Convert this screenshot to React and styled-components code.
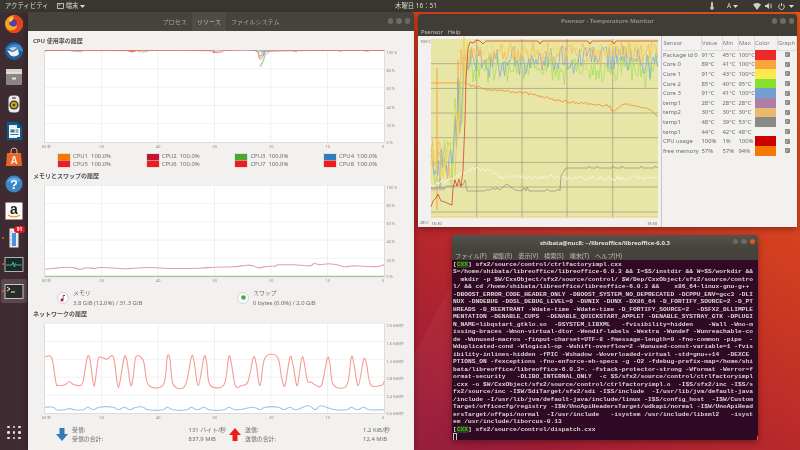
import styled, { createGlobalStyle } from "styled-components";

const GlobalStyle = createGlobalStyle`
  html, body { margin: 0; padding: 0; background: #000; }
  body { width: 800px; height: 450px; overflow: hidden; }
  * { box-sizing: border-box; }
`;

const UI_FONT = `"Noto Sans", "Noto Sans CJK JP", sans-serif`;

const Desktop = styled.div`
  position: relative;
  width: 800px;
  height: 450px;
  overflow: hidden;
  font-family: ${UI_FONT};
  filter: blur(0.3px);
  background:
    linear-gradient(118deg, transparent 58%, rgba(255, 255, 255, 0.035) 58%, transparent 75%),
    linear-gradient(200deg, transparent 70%, rgba(120, 10, 60, 0.25) 90%),
    linear-gradient(32deg, #7f1741 0%, #9c1c38 32%, #b8282b 52%, #d23f20 72%, #e8571a 100%);
`;

/* ---------- top bar ---------- */

const TopBar = styled.header`
  display: flex;
  align-items: center;
  height: 12px;
  background: #3a3730;
  color: #dcdad5;
  font-size: 6.4px;
  line-height: 12px;
`;

const TopLeft = styled.div`
  flex: 0 0 395px;
  display: flex;
  align-items: center;
  padding-left: 5px;
  gap: 8px;
`;

const AppMenu = styled.span`
  display: flex;
  align-items: center;
  gap: 2px;
`;

const Clock = styled.span`
  flex: 0 0 40px;
  white-space: nowrap;
`;

const TopRight = styled.div`
  flex: 1;
  display: flex;
  align-items: center;
  justify-content: flex-end;
  padding-right: 6px;
`;

const TrayItem = styled.span`
  display: flex;
  align-items: center;
  margin-left: ${(p) => p.$gap}px;
`;

const Caret = () => (
  <svg width="5" height="3" viewBox="0 0 5 3">
    <path d="M0 0h5L2.5 3z" fill="#dcdad5" />
  </svg>
);

/* ---------- dock ---------- */

const Dock = styled.nav`
  position: absolute;
  left: 0;
  top: 12px;
  bottom: 0;
  width: 28px;
  background: #3f2b32;
  display: flex;
  flex-direction: column;
  gap: 2.7px;
`;

const DockSlot = styled.div`
  position: relative;
  height: 24px;
  display: flex;
  align-items: center;
  justify-content: center;
  border-radius: 2px;
  margin: 0 1px;
  background: ${(p) => (p.$active ? "rgba(255,255,255,0.14)" : "transparent")};
`;

const RunDot = styled.i`
  position: absolute;
  left: 1px;
  top: 11px;
  width: 2px;
  height: 2px;
  border-radius: 50%;
  background: #e95420;
`;

const Badge = styled.b`
  position: absolute;
  right: 2px;
  top: 0;
  height: 7px;
  width: 11px;
  border-radius: 4px;
  background: #e8141a;
  color: #fff;
  font-size: 5px;
  line-height: 7px;
  text-align: center;
`;

const GridButton = styled.div`
  margin-top: auto;
  margin-bottom: 11px;
  display: grid;
  grid-template-columns: repeat(3, 2.5px);
  gap: 3px;
  justify-content: center;
  i {
    width: 2.5px;
    height: 2.5px;
    border-radius: 50%;
    background: #e6e2e2;
  }
`;

const Icon = ({ children }) => (
  <svg width="20" height="20" viewBox="0 0 20 20">
    {children}
  </svg>
);

const FirefoxIcon = () => (
  <Icon>
    <circle cx="10" cy="10" r="9" fill="#f7a31c" />
    <path d="M10 1a9 9 0 0 1 9 9c0 5-4 9-9 9-3 0-6-2-7.500-4 3 2 8 2 10-1 1-2 0-4-2-5 1 0 1-1 0-2-1 0-2-1-2-2 0-1 1-3 1.500-4z" fill="#e8431f" />
    <circle cx="9" cy="9" r="3.800" fill="#5b3fa8" />
    <path d="M5 6c1-2 3-3 5-3-1 1-1 2-1 3-1 0-2 1-2 2-1 0-2-1-2-2z" fill="#fdd23a" />
    <path d="M6 11c1 2 4 3 6 1-1 3-6 3-7 0z" fill="#f9c22a" />
  </Icon>
);

const ThunderbirdIcon = () => (
  <Icon>
    <circle cx="10" cy="10" r="9" fill="#1f5f9f" />
    <path d="M2 8c3-4 8-6 14-4 2 2 3 5 3 7-3-1-4-3-7-3-2 0-6 0-10 0z" fill="#3a8ed0" />
    <path d="M3 9l6 2 5-3 1 5c-2 3-7 3-9 1z" fill="#eef1f4" />
    <path d="M5 8c2-2 6-3 8-1l-4 3z" fill="#c9d2dc" />
  </Icon>
);

const FilesIcon = () => (
  <Icon>
    <rect x="2" y="2" width="16" height="16" rx="1.500" fill="#8b8780" />
    <rect x="2" y="2" width="16" height="4.500" fill="#d5d2cc" />
    <rect x="2" y="5.500" width="16" height="1.200" fill="#f2f0ec" />
    <rect x="8" y="10.500" width="4" height="2" rx="0.500" fill="#e9e7e2" />
  </Icon>
);

const RhythmboxIcon = () => (
  <Icon>
    <rect x="4.500" y="1.500" width="11" height="17" rx="4" fill="#ecebe3" />
    <circle cx="10" cy="11" r="4.600" fill="#3a3730" />
    <circle cx="10" cy="11" r="3.200" fill="#c9a227" />
    <circle cx="10" cy="11" r="1.200" fill="#4a3d12" />
    <rect x="8" y="3" width="4" height="2" rx="1" fill="#777" />
  </Icon>
);

const WriterIcon = () => (
  <Icon>
    <path d="M3 1h11l4 4v14H3z" fill="#0f5b8d" />
    <path d="M13 1h3l3 3v3z" fill="#0c3d5f" />
    <rect x="5" y="4" width="8" height="13" fill="#e8eef2" />
    <rect x="5" y="7" width="11" height="9" fill="#f4f6f7" />
    <rect x="6.500" y="8.500" width="4" height="3" fill="#3a6f95" />
    <path d="M11.500 9h3M11.500 11h3M6.500 13.500h8" stroke="#3a6f95" />
  </Icon>
);

const SoftwareIcon = () => (
  <Icon>
    <path d="M3 6h14l1 13H2z" fill="#e9662b" />
    <path d="M7 7V4a3 3 0 0 1 6 0v3" fill="none" stroke="#f7b08f" />
    <text x="10" y="16.500" textAnchor="middle" fontSize="10" fontWeight="700" fill="#fbe6da" fontFamily="Liberation Sans">A</text>
  </Icon>
);

const HelpIcon = () => (
  <Icon>
    <circle cx="10" cy="10" r="8.500" fill="#3b86c8" />
    <path d="M3 8a8 8 0 0 1 14 0c-4-2-10-2-14 0z" fill="#6aa9dd" />
    <text x="10" y="15" textAnchor="middle" fontSize="13" fontWeight="700" fill="#fff" fontFamily="Liberation Sans">?</text>
  </Icon>
);

const AmazonIcon = () => (
  <Icon>
    <rect x="1.500" y="1.500" width="17" height="17" fill="#fbfbf9" />
    <text x="10" y="13" textAnchor="middle" fontSize="14" fontWeight="700" fill="#222" fontFamily="Liberation Sans">a</text>
    <path d="M4 14c3 2.500 9 2.500 12 0" fill="none" stroke="#f0961e" strokeWidth="1.300" />
  </Icon>
);

const ThermoIcon = () => (
  <Icon>
    <rect x="5.500" y="0.500" width="9" height="19" fill="#e8edf2" />
    <rect x="8" y="5" width="4" height="13" fill="#4f8fdc" />
    <path d="M6 4h2M6 8h2M6 12h2M6 16h2" stroke="#9aa6b2" strokeWidth="0.600" />
  </Icon>
);

const MonitorIcon = () => (
  <Icon>
    <rect x="0.500" y="3" width="19" height="15" fill="#b3b3ae" />
    <rect x="1.500" y="4" width="17" height="13" fill="#1a2a2a" />
    <path d="M2 11h6l1-3 1.500 5 1-3.500 1 1.500h5" fill="none" stroke="#5fd0a8" strokeWidth="0.800" />
  </Icon>
);

const TerminalIcon = () => (
  <Icon>
    <rect x="0.500" y="3" width="19" height="15" fill="#c9c8c3" />
    <rect x="1.500" y="4" width="17" height="13" fill="#2b2a28" />
    <path d="M3 6l3 2-3 2" fill="none" stroke="#f0f0f0" strokeWidth="1" />
    <path d="M7 11h4" stroke="#f0f0f0" strokeWidth="1" />
  </Icon>
);

/* ---------- windows ---------- */

const Win = styled.section`
  position: absolute;
  left: ${(p) => p.$x}px;
  top: ${(p) => p.$y}px;
  width: ${(p) => p.$w}px;
  height: ${(p) => p.$h}px;
  display: flex;
  flex-direction: column;
  overflow: hidden;
  border-radius: 3px 3px 0 0;
  box-shadow: 0 2px 6px rgba(0, 0, 0, 0.35);
`;

const WinButtons = styled.div`
  position: absolute;
  right: ${(p) => p.$right}px;
  top: ${(p) => p.$top}px;
  display: flex;
  gap: 3px;
`;

const WinButton = styled.i`
  width: 5.500px;
  height: 5.500px;
  border-radius: 50%;
  background: ${(p) => (p.$close ? "#e95420" : "#6d6a63")};
`;

/* ---------- system monitor ---------- */

const MonitorHeader = styled.div`
  flex: 0 0 19px;
  display: flex;
  justify-content: center;
  background: #46433c;
  color: #a9a69f;
  font-size: 6.100px;
`;

const Tab = styled.span`
  display: flex;
  align-items: center;
  padding: 0 5px;
  background: ${(p) => (p.$active ? "#4f4c45" : "transparent")};
  color: ${(p) => (p.$active ? "#c4c2bb" : "#a9a69f")};
`;

const MonitorBody = styled.div`
  flex: 1;
  display: flex;
  flex-direction: column;
  background: #f2f1f0;
  padding: 6px 0 0 0;
  color: #6d6d6a;
  font-size: 5.900px;
`;

const SectionTitle = styled.h3`
  margin: ${(p) => p.$top || 0}px 0 ${(p) => p.$bottom}px 5px;
  height: 8px;
  font-size: 6px;
  line-height: 8px;
  font-weight: 700;
  color: #55534f;
`;

const PlotSvg = styled.svg`
  display: block;
  flex: none;
`;

const CpuLegend = styled.div`
  display: grid;
  grid-template-columns: repeat(4, 88.700px);
  margin: 2.500px 0 0 29px;
`;

const CpuCell = styled.div`
  display: flex;
  align-items: center;
  gap: 2px;
  height: 15px;
`;

const CpuSwatch = styled.div`
  width: 14px;
  height: 15px;
  border: 1px solid #e2e0de;
  background: linear-gradient(
    ${(p) => p.$color} 0 44%,
    #c98a8a 44% 54%,
    #ef1c1c 54% 100%
  );
`;

const CpuText = styled.div`
  line-height: 7.500px;
  white-space: pre;
`;

const MemLegend = styled.div`
  display: grid;
  grid-template-columns: 180px 180px;
  margin: 3px 0 0 29px;
`;

const MemCell = styled.div`
  display: flex;
  align-items: center;
  gap: 4px;
  height: 20px;
  line-height: 10px;
`;

const PieRing = styled.div`
  position: relative;
  width: 12px;
  height: 12px;
  border-radius: 50%;
  background: #fafafa;
  border: 1px solid #d6d4d1;
  display: flex;
  align-items: center;
  justify-content: center;
`;

const NetLegend = styled.div`
  display: grid;
  grid-template-columns: 170px 161px;
  gap: 3px;
  margin: 4.500px 0 0 28px;
`;

const NetCell = styled.div`
  display: flex;
  align-items: center;
  gap: 4px;
`;

const NetRows = styled.div`
  flex: 1;
  display: grid;
  grid-template-columns: 1fr auto;
  line-height: 9px;
`;

const trace = (pts, top) => {
  const p = pts.map(([x, y]) => [(x - 135) / 3, (y - top) / 3]);
  let d = `M${p[0][0].toFixed(1)} ${p[0][1].toFixed(1)}`;
  for (let i = 0; i < p.length - 1; i++) {
    const a = p[Math.max(i - 1, 0)];
    const b = p[i];
    const c = p[i + 1];
    const e = p[Math.min(i + 2, p.length - 1)];
    const c1 = [b[0] + (c[0] - a[0]) / 6, b[1] + (c[1] - a[1]) / 6];
    const c2 = [c[0] - (e[0] - b[0]) / 6, c[1] - (e[1] - b[1]) / 6];
    d += `C${c1[0].toFixed(1)} ${c1[1].toFixed(1)} ${c2[0].toFixed(1)} ${c2[1].toFixed(1)} ${c[0].toFixed(1)} ${c[1].toFixed(1)}`;
  }
  return d;
};

const XTICKS = ["60 秒", "50", "40", "30", "20", "10", "0"];

const ResourceChart = ({ height, yLabels, top, series }) => {
  const W = 339;
  const L = 17;
  const step = height / 5;
  return (
    <PlotSvg width="387" height={height + 9}>
      <g transform={`translate(${L} 0.5)`}>
        <rect x="-1" y="-0.500" width={W + 2} height={height + 1.500} fill="#dfddda" />
        <rect width={W} height={height} fill="#fff" />
        {[1, 2, 3, 4, 5].map((i) => (
          <path key={i} d={`M${(W * i) / 6} 0V${height}`} stroke="#ededec" strokeWidth="0.800" />
        ))}
        {[1, 2, 3, 4].map((i) => (
          <path key={i} d={`M0 ${step * i}H${W}`} stroke="#ededec" strokeWidth="0.800" />
        ))}
        {series.map((s, i) => (
          <path
            key={i}
            d={trace(s.pts, top)}
            fill="none"
            stroke={s.color}
            strokeWidth={s.width || 0.900}
            strokeLinejoin="round"
          />
        ))}
        {yLabels.map((t, i) => (
          <text
            key={t}
            x={W + 2.500}
            y={step * i + (i === 5 ? 1.500 : 3.200)}
            fontSize="3.800"
            fill="#8a8986"
          >
            {t}
          </text>
        ))}
        {XTICKS.map((t, i) => (
          <text
            key={t}
            x={(W * i) / 6 - (i === 0 ? 3 : 2)}
            y={height + 5.500}
            fontSize="3.800"
            fill="#8a8986"
          >
            {t}
          </text>
        ))}
      </g>
    </PlotSvg>
  );
};

const PCT = ["100 %", "80 %", "60 %", "40 %", "20 %", "0 %"];
const NET_Y = ["2.0 KiB/秒", "1.6 KiB/秒", "1.2 KiB/秒", "0.8 KiB/秒", "0.4 KiB/秒", "0.0 KiB/秒"];

const CPU_SERIES = [
  { color: "#f5b27a", pts: [[135, 152], [380, 153], [395, 156], [410, 152], [620, 153], [640, 158], [665, 152], [765, 152], [778, 172], [792, 158], [805, 152], [880, 152], [890, 156], [900, 152], [1153, 152]] },
  { color: "#8fc0e6", pts: [[135, 155], [150, 152], [235, 152], [245, 156], [255, 152], [765, 152], [780, 168], [795, 155], [810, 152], [1153, 152]] },
  { color: "#9ad08a", pts: [[135, 152], [420, 152], [430, 157], [440, 152], [765, 152], [780, 200], [795, 168], [808, 153], [1085, 152], [1095, 155], [1105, 152], [1153, 152]] },
  { color: "#ee6a6a", pts: [[135, 152], [385, 152], [395, 156], [405, 152], [625, 152], [640, 158], [665, 156], [680, 152], [765, 152], [780, 178], [795, 160], [808, 154], [1000, 152], [1020, 154], [1040, 152], [1153, 152]] },
];

const MEM_SERIES = [
  { color: "#dfa0b4", width: 1.100, pts: [[135, 298], [160, 296], [185, 293], [215, 293], [240, 298], [260, 294], [285, 296], [300, 293], [350, 295], [380, 297], [440, 293], [520, 296], [600, 295], [640, 292], [700, 291], [740, 286], [760, 288], [775, 294], [800, 290], [825, 289], [835, 285], [880, 285], [930, 288], [942, 281], [960, 285], [985, 282], [1010, 285], [1035, 291], [1060, 288], [1110, 290], [1135, 290], [1153, 284]] },
  { color: "#86c27a", width: 1.100, pts: [[135, 319], [1153, 319]] },
];

const NET_SERIES = [
  { color: "#f59c94", width: 1.100, pts: [[135, 142], [155, 145], [168, 220], [175, 227], [195, 226], [208, 216], [222, 226], [245, 226], [252, 200], [262, 143], [270, 150], [282, 230], [292, 165], [298, 143], [320, 149], [340, 142], [352, 222], [358, 227], [372, 147], [380, 150], [392, 227], [400, 200], [408, 142], [430, 153], [445, 226], [490, 226], [502, 143], [510, 150], [520, 226], [555, 229], [574, 143], [582, 155], [595, 228], [612, 143], [620, 160], [630, 226], [672, 226], [686, 143], [694, 160], [706, 229], [725, 228], [744, 216], [760, 145], [768, 160], [780, 228], [795, 145], [832, 142], [845, 205], [855, 228], [870, 143], [880, 170], [892, 228], [907, 142], [922, 212], [935, 218], [945, 226], [965, 226], [982, 146], [990, 165], [1000, 226], [1040, 228], [1054, 143], [1062, 165], [1075, 228], [1091, 150], [1100, 165], [1112, 226], [1145, 227], [1153, 215]] },
  { color: "#9cc6e6", width: 1.100, pts: [[135, 293], [160, 293], [170, 301], [195, 301], [208, 296], [222, 301], [250, 301], [263, 293], [280, 301], [298, 293], [340, 293], [355, 301], [373, 293], [390, 301], [408, 293], [430, 293], [445, 301], [490, 301], [502, 293], [520, 301], [560, 301], [574, 293], [592, 301], [612, 293], [628, 301], [672, 301], [686, 293], [704, 301], [725, 299], [760, 293], [780, 301], [795, 293], [835, 293], [852, 301], [870, 293], [888, 301], [925, 288], [945, 301], [962, 289], [1000, 300], [1040, 301], [1054, 293], [1072, 301], [1091, 293], [1108, 301], [1153, 301]] },
];

const CPUS = [
  ["#f57900", "CPU1  100.0%", "CPU5  100.0%"],
  ["#c4142f", "CPU2  100.0%", "CPU6  100.0%"],
  ["#4aa82f", "CPU3  100.0%", "CPU7  100.0%"],
  ["#2f7dbd", "CPU4  100.0%", "CPU8  100.0%"],
];

const SystemMonitor = () => (
  <Win $x={28} $y={12} $w={386} $h={438}>
    <MonitorHeader>
      <Tab>プロセス</Tab>
      <Tab $active>リソース</Tab>
      <Tab>ファイルシステム</Tab>
    </MonitorHeader>
    <WinButtons $right={4} $top={6}>
      <WinButton />
      <WinButton />
      <WinButton />
    </WinButtons>
    <MonitorBody>
      <SectionTitle $bottom={5}>CPU 使用率の履歴</SectionTitle>
      <ResourceChart height={91.500} top={152} yLabels={PCT} series={CPU_SERIES} />
      <CpuLegend>
        {CPUS.map(([c, a, b]) => (
          <CpuCell key={a}>
            <CpuSwatch $color={c} />
            <CpuText>
              {a}
              <br />
              {b}
            </CpuText>
          </CpuCell>
        ))}
      </CpuLegend>
      <SectionTitle $top={3.500} $bottom={5}>メモリとスワップの履歴</SectionTitle>
      <ResourceChart height={91} top={47} yLabels={PCT} series={MEM_SERIES} />
      <MemLegend>
        <MemCell>
          <PieRing>
            <svg width="8" height="8" viewBox="0 0 8 8">
              <path d="M4 1l2 0 0 1-1.500 0 0 4a1.500 1.500 0 1 1-1-1.300z" fill="#a41e4f" />
            </svg>
          </PieRing>
          <div>
            メモリ
            <br />
            3.8 GiB (12.0%) / 31.3 GiB
          </div>
        </MemCell>
        <MemCell>
          <PieRing>
            <svg width="5" height="5" viewBox="0 0 5 5">
              <circle cx="2.500" cy="2.500" r="2.300" fill="#4aa84a" />
            </svg>
          </PieRing>
          <div>
            スワップ
            <br />
            0 bytes (0.0%) / 2.0 GiB
          </div>
        </MemCell>
      </MemLegend>
      <SectionTitle $top={2.500} $bottom={4.500}>ネットワークの履歴</SectionTitle>
      <ResourceChart height={89.500} top={42} yLabels={NET_Y} series={NET_SERIES} />
      <NetLegend>
        <NetCell>
          <svg width="12" height="13" viewBox="0 0 12 13">
            <path d="M3.500 0h5v6H12L6 13 0 6h3.500z" fill="#2f7dbd" />
          </svg>
          <NetRows>
            <span>受信:</span>
            <span>131 バイト/秒</span>
            <span>受信の合計:</span>
            <span>837.9 MiB</span>
          </NetRows>
        </NetCell>
        <NetCell>
          <svg width="12" height="13" viewBox="0 0 12 13">
            <path d="M3.500 13h5V7H12L6 0 0 7h3.500z" fill="#ee1c1c" />
          </svg>
          <NetRows>
            <span>送信:</span>
            <span>1.2 KiB/秒</span>
            <span>送信の合計:</span>
            <span>12.4 MiB</span>
          </NetRows>
        </NetCell>
      </NetLegend>
    </MonitorBody>
  </Win>
);

/* ---------- psensor ---------- */

const SensorHeader = styled.div`
  flex: 0 0 14px;
  display: flex;
  align-items: center;
  justify-content: center;
  background: #403d36;
  color: #8f8c85;
  font-size: 6px;
  font-weight: 700;
`;

const SensorMenu = styled.div`
  flex: 0 0 8px;
  display: flex;
  align-items: center;
  gap: 5px;
  padding-left: 3px;
  background: #403d36;
  color: #c3c1bb;
  font-size: 5.800px;
`;

const SensorBody = styled.div`
  flex: 1;
  display: flex;
  background: #f2f1f0;
`;

const SensorTable = styled.div`
  flex: 1;
  border-left: 1.500px solid #c9c7c4;
  margin-left: 0.500px;
  color: #6b6b68;
  font-size: 5.900px;
`;

const SensorRow = styled.div`
  display: grid;
  grid-template-columns: 38.500px 21px 16px 16px 23px 1fr;
  height: ${(p) => (p.$head ? 14 : 9.600)}px;
  align-items: center;
  padding-left: 1.500px;
  white-space: nowrap;
  span:nth-child(5) {
    align-self: stretch;
  }
`;

const HeadCell = styled.span`
  height: 100%;
  line-height: 14px;
  border-right: 0.500px solid #dedcda;
  border-bottom: 0.500px solid #dedcda;
  color: #7b7b78;
  text-align: ${(p) => (p.$center ? "center" : "left")};
  padding-left: 0.500px;
`;

const ColorCell = styled.span`
  display: block;
  width: 21px;
  background: ${(p) => p.$color};
`;

const CheckCell = styled.span`
  justify-self: center;
  width: 5px;
  height: 5px;
  border-radius: 1px;
  background: #8a8986;
  color: #f4f4f4;
  font: 700 4.500px/5px "DejaVu Sans", sans-serif;
  text-align: center;
`;

const rng = (seed) => () => {
  seed = (seed * 1664525 + 1013904223) % 4294967296;
  return seed / 4294967296;
};

// noisy line through psensor chart, base shifted per sensor
const noisy = (seed, offset, amp, from = 431) => {
  const r = rng(seed);
  const pts = [];
  for (let x = from; x <= 658; x += 1.500) {
    let base = offset;
    let a = amp;
    if (x < 452) {
      base = 155 + offset * 0.1;
      a = 22;
    } else if (x < 466) {
      base = 150 - ((x - 452) / 14) * (150 - offset);
      a = 38;
    }
    const spike = r() < 0.12 ? a * 0.7 : 0;
    pts.push(`${x},${(base + (r() - 0.5) * a * 2 + spike).toFixed(1)}`);
  }
  return pts.join(" ");
};

const wobble = (seed, pts, amp) => {
  const r = rng(seed);
  const out = [];
  for (let i = 0; i < pts.length - 1; i++) {
    const [x0, y0] = pts[i];
    const [x1, y1] = pts[i + 1];
    for (let x = x0; x < x1; x += 1.500) {
      const y = y0 + ((x - x0) / (x1 - x0)) * (y1 - y0);
      out.push(`${x},${(y + (r() - 0.5) * amp * 2).toFixed(1)}`);
    }
  }
  return out.join(" ");
};

const TEMP_LINES = [
  { seed: 11, color: "#a4e05a", y: 68, amp: 13 },
  { seed: 23, color: "#86abd6", y: 58, amp: 12 },
  { seed: 37, color: "#f9b55a", y: 52, amp: 10 },
  { seed: 41, color: "#f5dc60", y: 49, amp: 7 },
];

const SensorChart = () => (
  <svg width="242" height="191" viewBox="418 36 242 191" style={{ display: "block", flex: "none" }}>
    <rect x="431" y="39" width="227" height="179" fill="#e8e6a6" />
    {[476.700, 522, 567, 612.700].map((x) => (
      <path key={x} d={`M${x} 39V218`} stroke="#a3a184" strokeWidth="0.800" />
    ))}
    {[63.700, 88.400, 113, 137.700, 162.400, 187, 212].map((y) => (
      <path key={y} d={`M431 ${y}H658`} stroke="#a3a184" strokeWidth="0.800" />
    ))}
    <path d="M431 216.500H658" stroke="#f0c890" strokeWidth="0.700" />
    <path d="M431 83H466M437 68V210M458 60V130" stroke="#f9a13c" strokeWidth="1" fill="none" />
    {TEMP_LINES.map((l) => (
      <polyline key={l.seed} points={noisy(l.seed, l.y, l.amp)} fill="none" stroke={l.color} strokeWidth="0.800" strokeLinejoin="round" />
    ))}
    <polyline
      points={wobble(7, [[431, 186], [445, 181], [472, 169], [490, 170], [500, 177], [560, 177], [566, 178], [658, 178]], 2.200)}
      fill="none"
      stroke="#f6f4e0"
      strokeWidth="1"
    />
    <path d="M431 189H445" stroke="#c9c7a8" strokeWidth="3" />
    <polyline
      points="431,188 445,188 447,186 457,186 460,184 463,185 465,180 467,191 484,191 486,190 490,190 493,188 495,190 497,188 500,190 503,187 507,184 511,187 515,190 522,191 524,188 526,191 527,187 529,191 545,191 547,189 549,191 556,191 558,189 560,191 561,176 565,169 567,168 588,168 589,166 591,168 596,168 597,166 599,168 612,168 613,166 615,168 621,168 622,166 624,168 640,168 641,166 643,168 654,168 655,166 658,168"
      fill="none"
      stroke="#8e8c76"
      strokeWidth="0.700"
    />
    <polyline
      points="431,207 433,201 436,198 438,194 441,201 445,202 449,204 452,205 453,188 455,180 457,186 459,179 461,187 463,170 465,120 466,80 468,48 470,42 474,43 476,40 480,41 483,44 486,41 500,41 503,41 520,41 538,41 540,44 542,41 588,41 590,44 592,41 612,41 614,44 616,41 658,41"
      fill="none"
      stroke="#d8432a"
      strokeWidth="0.800"
    />
    <polyline
      points={wobble(19, [[468, 85], [490, 90], [520, 92], [540, 96], [560, 101], [580, 103], [610, 106], [612, 112], [625, 104], [650, 109], [658, 116]], 1.300)}
      fill="none"
      stroke="#f08a24"
      strokeWidth="0.800"
    />
    <g fontSize="4" fill="#66665f">
      <text x="420" y="43">100°C</text>
      <text x="420" y="223.500">28°C</text>
      <text x="431.500" y="224.500">16:30</text>
      <text x="647" y="224.500">16:50</text>
    </g>
  </svg>
);

const SENSORS = [
  ["Package id 0", "91°C", "45°C", "100°C", "#ef2929"],
  ["Core 0", "89°C", "41°C", "100°C", "#f9a53c"],
  ["Core 1", "91°C", "43°C", "100°C", "#fce94f"],
  ["Core 2", "85°C", "40°C", "95°C", "#85e02f"],
  ["Core 3", "91°C", "41°C", "100°C", "#729fcf"],
  ["temp1", "28°C", "28°C", "28°C", "#ad7fa8"],
  ["temp2", "30°C", "30°C", "30°C", "#e9b96e"],
  ["temp1", "48°C", "39°C", "53°C", "#888a85"],
  ["temp1", "44°C", "42°C", "48°C", "#f2f1f0"],
  ["CPU usage", "100%", "1%", "100%", "#cc0000"],
  ["free memory", "57%", "57%", "94%", "#f57900"],
];

const Psensor = () => (
  <Win $x={418} $y={14} $w={379} $h={213}>
    <SensorHeader>Psensor - Temperature Monitor</SensorHeader>
    <WinButtons $right={3} $top={4}>
      <WinButton />
      <WinButton />
      <WinButton />
    </WinButtons>
    <SensorMenu>
      <span>Psensor</span>
      <span>Help</span>
    </SensorMenu>
    <SensorBody>
      <SensorChart />
      <SensorTable>
        <SensorRow $head>
          <HeadCell>Sensor</HeadCell>
          <HeadCell>Value</HeadCell>
          <HeadCell>Min</HeadCell>
          <HeadCell>Max</HeadCell>
          <HeadCell>Color</HeadCell>
          <HeadCell>Graph</HeadCell>
        </SensorRow>
        {SENSORS.map(([name, value, min, max, color], i) => (
          <SensorRow key={i}>
            <span>{name}</span>
            <span>{value}</span>
            <span>{min}</span>
            <span>{max}</span>
            <ColorCell $color={color} />
            <CheckCell>✓</CheckCell>
          </SensorRow>
        ))}
      </SensorTable>
    </SensorBody>
  </Win>
);

/* ---------- terminal ---------- */

const TermHeader = styled.div`
  flex: 0 0 15px;
  display: flex;
  align-items: center;
  justify-content: center;
  background: linear-gradient(#55524b, #45423c);
  color: #e4e2dd;
  font-size: 6px;
  font-weight: 700;
`;

const TermMenu = styled.div`
  flex: 0 0 10px;
  display: flex;
  align-items: center;
  gap: 6px;
  padding-left: 3px;
  background: #45423c;
  color: #bcb9b2;
  font-size: 6.200px;
`;

const TermBody = styled.pre`
  position: relative;
  flex: 1;
  margin: 0;
  padding: 0.500px 0 0 1px;
  background: #300a24;
  color: #dcd8d4;
  font: 700 6.250px/7.500px "Liberation Mono", monospace;
`;

const CxxTag = styled.span`
  color: #58b01a;
  background: #24451c;
`;

const Cursor = styled.span`
  display: inline-block;
  width: 3.750px;
  height: 7.500px;
  border: 0.700px solid #c8c5c2;
  vertical-align: top;
`;

const ScrollMark = styled.i`
  position: absolute;
  right: 0;
  bottom: 0;
  width: 1.500px;
  height: 5px;
  background: #e95420;
`;

const TERM_LINES = [
  "S=/home/shibata/libreoffice/libreoffice-6.0.3 && I=$S/instdir && W=$S/workdir &&",
  "  mkdir -p $W/CxxObject/sfx2/source/control/ $W/Dep/CxxObject/sfx2/source/contro",
  "l/ && cd /home/shibata/libreoffice/libreoffice-6.0.3 &&    x86_64-linux-gnu-g++",
  "-DBOOST_ERROR_CODE_HEADER_ONLY -DBOOST_SYSTEM_NO_DEPRECATED -DCPPU_ENV=gcc3 -DLI",
  "NUX -DNDEBUG -DOSL_DEBUG_LEVEL=0 -DUNIX -DUNX -DX86_64 -D_FORTIFY_SOURCE=2 -D_PT",
  "HREADS -D_REENTRANT -Wdate-time -Wdate-time -D_FORTIFY_SOURCE=2  -DSFX2_DLLIMPLE",
  "MENTATION -DENABLE_CUPS  -DENABLE_QUICKSTART_APPLET -DENABLE_SYSTRAY_GTK -DPLUGI",
  "N_NAME=libqstart_gtklo.so  -DSYSTEM_LIBXML   -fvisibility=hidden    -Wall -Wno-m",
  "issing-braces -Wnon-virtual-dtor -Wendif-labels -Wextra -Wundef -Wunreachable-co",
  "de -Wunused-macros -finput-charset=UTF-8 -fmessage-length=0 -fno-common -pipe  -",
  "Wduplicated-cond -Wlogical-op -Wshift-overflow=2 -Wunused-const-variable=1 -fvis",
  "ibility-inlines-hidden -fPIC -Wshadow -Woverloaded-virtual -std=gnu++14  -DEXCE",
  "PTIONS_ON -fexceptions -fno-enforce-eh-specs -g -O2 -fdebug-prefix-map=/home/shi",
  "bata/libreoffice/libreoffice-6.0.3=. -fstack-protector-strong -Wformat -Werror=f",
  "ormat-security   -DLIBO_INTERNAL_ONLY  -c $S/sfx2/source/control/ctrlfactoryimpl",
  ".cxx -o $W/CxxObject/sfx2/source/control/ctrlfactoryimpl.o  -I$S/sfx2/inc -I$S/s",
  "fx2/source/inc -I$W/SdiTarget/sfx2/sdi -I$S/include  -I/usr/lib/jvm/default-java",
  "/include -I/usr/lib/jvm/default-java/include/linux -I$S/config_host  -I$W/Custom",
  "Target/officecfg/registry -I$W/UnoApiHeadersTarget/udkapi/normal -I$W/UnoApiHead",
  "ersTarget/offapi/normal  -I/usr/include   -isystem /usr/include/libxml2   -isyst",
  "em /usr/include/liborcus-0.13",
];

const Terminal = () => (
  <Win $x={452} $y={235} $w={306} $h={205}>
    <TermHeader>shibata@nuc8: ~/libreoffice/libreoffice-6.0.3</TermHeader>
    <WinButtons $right={3} $top={3.500}>
      <WinButton />
      <WinButton />
      <WinButton $close />
    </WinButtons>
    <TermMenu>
      <span>ファイル(F)</span>
      <span>編集(E)</span>
      <span>表示(V)</span>
      <span>検索(S)</span>
      <span>端末(T)</span>
      <span>ヘルプ(H)</span>
    </TermMenu>
    <TermBody>
      [<CxxTag>CXX</CxxTag>] sfx2/source/control/ctrlfactoryimpl.cxx{"\n"}
      {TERM_LINES.join("\n")}
      {"\n"}[<CxxTag>CXX</CxxTag>] sfx2/source/control/dispatch.cxx{"\n"}
      <Cursor />
      <ScrollMark />
    </TermBody>
  </Win>
);

const App = () => (
  <Desktop>
    <GlobalStyle />
    <TopBar>
      <TopLeft>
        <span>アクティビティ</span>
        <AppMenu>
          <svg width="7" height="6" viewBox="0 0 7 6">
            <rect x="0.500" y="0.500" width="6" height="5" fill="none" stroke="#dcdad5" strokeWidth="0.800" />
            <path d="M1.500 2h2" stroke="#dcdad5" strokeWidth="0.800" />
          </svg>
          端末
          <Caret />
        </AppMenu>
      </TopLeft>
      <Clock>木曜日 16：51</Clock>
      <TopRight>
        <TrayItem $gap={0}>
          <svg width="4" height="8" viewBox="0 0 4 8">
            <rect x="1" y="0" width="2" height="5.500" rx="1" fill="#cfcdc8" />
            <circle cx="2" cy="6" r="1.800" fill="#cfcdc8" />
          </svg>
        </TrayItem>
        <TrayItem $gap={13}>A</TrayItem>
        <TrayItem $gap={2}>
          <Caret />
        </TrayItem>
        <TrayItem $gap={15}>
          <svg width="8" height="7" viewBox="0 0 8 7">
            <path d="M0 1.500a6 6 0 0 1 8 0L4 7z" fill="#cfcdc8" />
          </svg>
        </TrayItem>
        <TrayItem $gap={4}>
          <svg width="7" height="6" viewBox="0 0 7 6">
            <path d="M0 2h1.500L4 0v6L1.500 4H0z" fill="#cfcdc8" />
            <path d="M5 1.500a2.500 2.500 0 0 1 0 3M6 .5a4 4 0 0 1 0 5" stroke="#cfcdc8" strokeWidth="0.700" fill="none" />
          </svg>
        </TrayItem>
        <TrayItem $gap={6}>
          <svg width="7" height="7" viewBox="0 0 7 7">
            <path d="M2 1.300a2.800 2.800 0 1 0 3 0" fill="none" stroke="#dcdad5" strokeWidth="0.900" />
            <path d="M3.500 0v3" stroke="#dcdad5" strokeWidth="0.900" />
          </svg>
        </TrayItem>
        <TrayItem $gap={4}>
          <Caret />
        </TrayItem>
      </TopRight>
    </TopBar>
    <Dock>
      <DockSlot><FirefoxIcon /></DockSlot>
      <DockSlot><ThunderbirdIcon /></DockSlot>
      <DockSlot><FilesIcon /></DockSlot>
      <DockSlot><RhythmboxIcon /></DockSlot>
      <DockSlot><WriterIcon /></DockSlot>
      <DockSlot><SoftwareIcon /></DockSlot>
      <DockSlot><HelpIcon /></DockSlot>
      <DockSlot><AmazonIcon /></DockSlot>
      <DockSlot>
        <ThermoIcon />
        <Badge>91</Badge>
        <RunDot />
      </DockSlot>
      <DockSlot>
        <MonitorIcon />
        <RunDot />
      </DockSlot>
      <DockSlot $active>
        <TerminalIcon />
        <RunDot />
      </DockSlot>
      <GridButton>
        {Array.from({ length: 9 }, (_, i) => (
          <i key={i} />
        ))}
      </GridButton>
    </Dock>
    <SystemMonitor />
    <Psensor />
    <Terminal />
  </Desktop>
);

export default App;
